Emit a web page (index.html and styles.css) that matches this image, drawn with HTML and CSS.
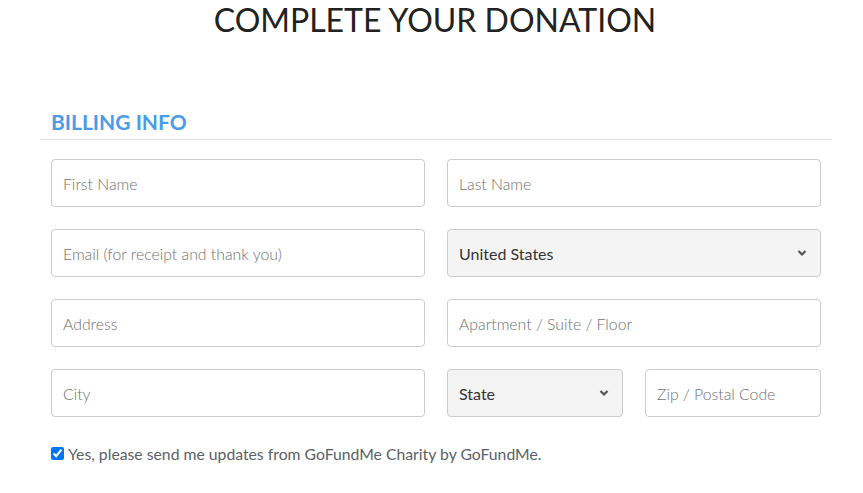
FILE: index.html
```html
<!doctype html>
<html lang="en">
<head>
    <meta charset="UTF-8">
    <meta name="viewport" content="width=device-width, initial-scale=1.0">
    <title>Complete your donation</title>
    <link rel="stylesheet" href="styles.css">
</head>
<body>
<h1 class="title">COMPLETE YOUR DONATION</h1>

<form class="billing">
    <h2 class="billing-head">BILLING INFO</h2>

    <div class="fields">
        <div class="row">
            <input class="field" type="text" placeholder="First Name">
            <input class="field" type="text" placeholder="Last Name">
        </div>
        <div class="row">
            <input class="field" type="email" placeholder="Email (for receipt and thank you)">
            <div class="select-wrap">
                <select class="field select">
                    <option>United States</option>
                    <option>Canada</option>
                </select>
                <svg class="chevron" width="10" height="8" viewBox="0 0 10 8">
                    <path d="M1.5 2 L5 5.5 L8.5 2" fill="none" stroke="#555" stroke-width="2.2"/>
                </svg>
            </div>
        </div>
        <div class="row">
            <input class="field" type="text" placeholder="Address">
            <input class="field" type="text" placeholder="Apartment / Suite / Floor">
        </div>
        <div class="row">
            <input class="field" type="text" placeholder="City">
            <div class="row half">
                <div class="select-wrap">
                    <select class="field select">
                        <option>State</option>
                        <option>Alabama</option>
                    </select>
                    <svg class="chevron" width="10" height="8" viewBox="0 0 10 8">
                        <path d="M1.5 2 L5 5.5 L8.5 2" fill="none" stroke="#555" stroke-width="2.2"/>
                    </svg>
                </div>
                <input class="field" type="text" placeholder="Zip / Postal Code">
            </div>
        </div>
    </div>

    <label class="updates">
        <input type="checkbox" checked>
        Yes, please send me updates from GoFundMe Charity by GoFundMe.
    </label>
</form>
</body>
</html>
```

FILE: styles.css
```css
* {
    margin: 0;
    padding: 0;
    box-sizing: border-box;
}

body {
    font-family: Lato, "Open Sans", sans-serif;
    background: #fff;
    color: #333;
}

.title {
    font-size: 32px;
    font-weight: 400;
    line-height: 40px;
    text-align: center;
    color: #222;
    padding-left: 7px;
}

.billing {
    width: 792px;
    margin: 69px 0 0 40px;
}

.billing-head {
    font-size: 21px;
    font-weight: 700;
    color: #4a9be8;
    line-height: 26px;
    padding: 0 11px 4px;
    border-bottom: 1px solid #ddd;
}

.fields {
    display: flex;
    flex-direction: column;
    gap: 22px;
    padding: 19px 11px 0;
}

.row {
    display: grid;
    grid-template-columns: 1fr 1fr;
    gap: 22px;
}

.field {
    width: 100%;
    height: 48px;
    border: 1px solid #ccc;
    border-radius: 4px;
    padding: 0 11px;
    font-family: Lato, "Open Sans", sans-serif;
    font-size: 15.8px;
    font-weight: 300;
    color: #333;
    background: #fff;
    outline: none;
}

.field::placeholder {
    color: #6f6f6f;
    font-weight: 300;
}

.select-wrap {
    position: relative;
}

.select {
    appearance: none;
    -webkit-appearance: none;
    background: #f4f4f4;
    font-size: 16px;
    font-weight: 400;
    color: #333;
}

.chevron {
    position: absolute;
    right: 14px;
    top: 20px;
    pointer-events: none;
}

.updates {
    display: flex;
    align-items: center;
    gap: 4px;
    margin: 27px 0 0 11px;
    font-size: 15.75px;
    color: #5b6168;
}

.updates input {
    width: 13px;
    height: 13px;
    margin: 0;
}
```
